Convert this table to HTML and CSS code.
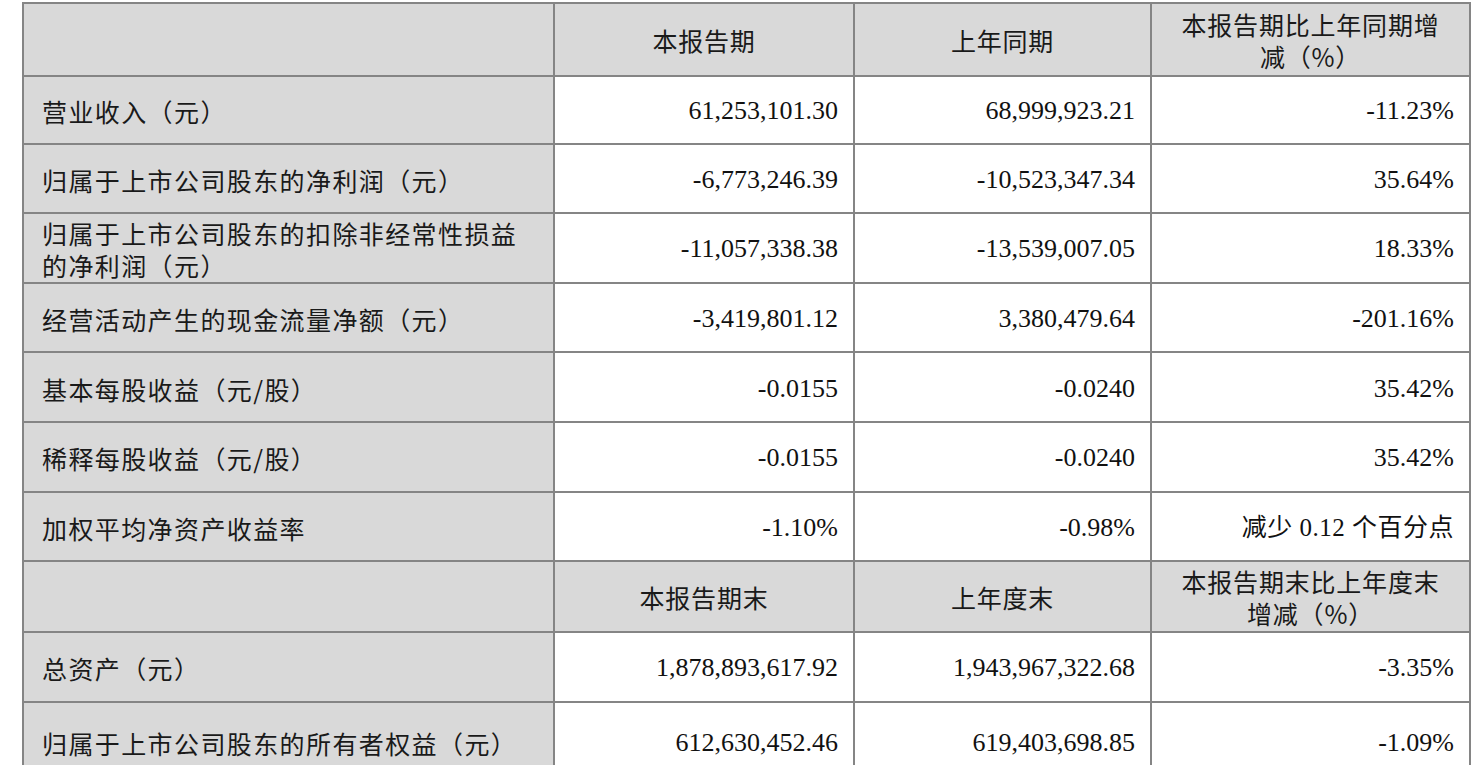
FILE: index.html
```html
<!DOCTYPE html>
<html lang="zh-CN">
<head>
<meta charset="utf-8">
<title>主要会计数据</title>
<link rel="stylesheet" href="styles.css">
</head>
<body>
<table class="data">
  <colgroup>
    <col class="c1"><col class="c2"><col class="c3"><col class="c4">
  </colgroup>
  <tr class="head">
    <td class="label"></td>
    <td class="hd">本报告期</td>
    <td class="hd">上年同期</td>
    <td class="hd two">本报告期比上年同期增<br>减（%）</td>
  </tr>
  <tr class="first">
    <td class="label">营业收入（元）</td>
    <td class="num">61,253,101.30</td>
    <td class="num">68,999,923.21</td>
    <td class="num">-11.23%</td>
  </tr>
  <tr>
    <td class="label">归属于上市公司股东的净利润（元）</td>
    <td class="num">-6,773,246.39</td>
    <td class="num">-10,523,347.34</td>
    <td class="num">35.64%</td>
  </tr>
  <tr>
    <td class="label two">归属于上市公司股东的扣除非经常性损益<br>的净利润（元）</td>
    <td class="num">-11,057,338.38</td>
    <td class="num">-13,539,007.05</td>
    <td class="num">18.33%</td>
  </tr>
  <tr>
    <td class="label">经营活动产生的现金流量净额（元）</td>
    <td class="num">-3,419,801.12</td>
    <td class="num">3,380,479.64</td>
    <td class="num">-201.16%</td>
  </tr>
  <tr>
    <td class="label">基本每股收益（元/股）</td>
    <td class="num">-0.0155</td>
    <td class="num">-0.0240</td>
    <td class="num">35.42%</td>
  </tr>
  <tr>
    <td class="label">稀释每股收益（元/股）</td>
    <td class="num">-0.0155</td>
    <td class="num">-0.0240</td>
    <td class="num">35.42%</td>
  </tr>
  <tr>
    <td class="label">加权平均净资产收益率</td>
    <td class="num">-1.10%</td>
    <td class="num">-0.98%</td>
    <td class="num mixed">减少 0.12 个百分点</td>
  </tr>
  <tr class="head head2">
    <td class="label"></td>
    <td class="hd">本报告期末</td>
    <td class="hd">上年度末</td>
    <td class="hd two">本报告期末比上年度末<br>增减（%）</td>
  </tr>
  <tr>
    <td class="label">总资产（元）</td>
    <td class="num">1,878,893,617.92</td>
    <td class="num">1,943,967,322.68</td>
    <td class="num">-3.35%</td>
  </tr>
  <tr class="last">
    <td class="label">归属于上市公司股东的所有者权益（元）</td>
    <td class="num">612,630,452.46</td>
    <td class="num">619,403,698.85</td>
    <td class="num">-1.09%</td>
  </tr>
</table>
</body>
</html>
```

FILE: styles.css
```css
html, body {
  margin: 0;
  padding: 0;
  background: #ffffff;
}

body {
  padding: 2px 0 0 22px;
  font-family: "Liberation Serif", "Noto Sans CJK SC", serif;
  color: #111111;
}

.data {
  border-collapse: collapse;
  table-layout: fixed;
  width: 1447px;
}

.c1 { width: 531px; }
.c2 { width: 300px; }
.c3 { width: 297px; }
.c4 { width: 319px; }

.data td {
  border: 2px solid #858585;
  height: 69.6px;
  padding: 3px 16px 0 18px;
  vertical-align: middle;
  box-sizing: border-box;
  font-size: 26px;
  line-height: 32px;
}

.data tr.head td {
  height: 73px;
  background: #d9d9d9;
}

.data tr.first td {
  height: 67.6px;
}

.data tr.head2 td {
  height: 71px;
}

.data tr.last td {
  height: 80px;
}

.data td.label {
  background: #d9d9d9;
  text-align: left;
  font-family: "Noto Sans CJK SC", sans-serif;
  font-size: 25px;
  letter-spacing: 1.4px;
  padding-left: 18px;
  color: #1a1a1a;
}

.data td.hd {
  text-align: center;
  font-family: "Noto Sans CJK SC", sans-serif;
  font-size: 25px;
  letter-spacing: 0.8px;
  padding: 0 4px;
  color: #1a1a1a;
}

.data td.num {
  text-align: right;
  padding-right: 15px;
  letter-spacing: 0;
}

.data td.mixed {
  font-family: "Liberation Serif", "Noto Sans CJK SC", serif;
  font-size: 25px;
  letter-spacing: 0.5px;
}
```
